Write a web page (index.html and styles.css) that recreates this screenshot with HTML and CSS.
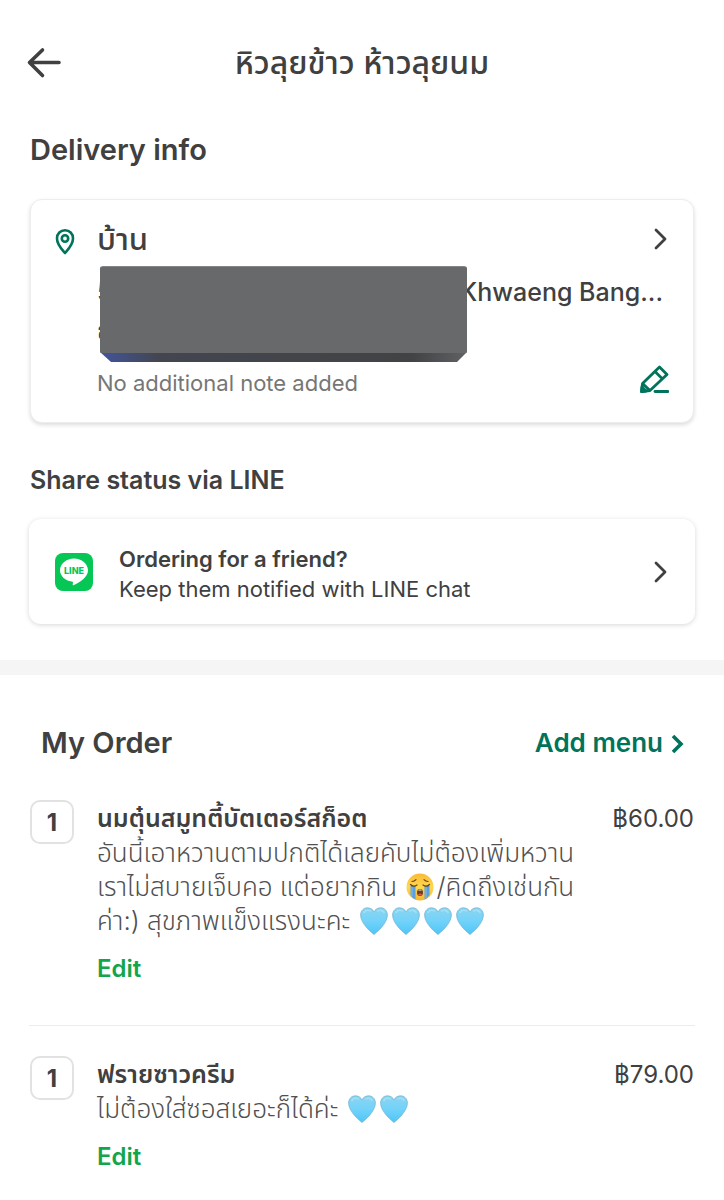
FILE: index.html
```html
<!DOCTYPE html>
<html lang="en">
<head>
<meta charset="utf-8">
<meta name="viewport" content="width=device-width, initial-scale=1">
<title>Order summary</title>
<link rel="stylesheet" href="styles.css">
</head>
<body>
<svg class="defs" aria-hidden="true">
  <defs>
    <linearGradient id="heart-fill" x1="0" y1="0" x2="0" y2="1">
      <stop offset="0" stop-color="#8cd5f0"/>
      <stop offset="0.5" stop-color="#72d2fa"/>
      <stop offset="1" stop-color="#4fc5f5"/>
    </linearGradient>
    <linearGradient id="face-fill" x1="0" y1="0" x2="0" y2="1">
      <stop offset="0" stop-color="#fbb936"/>
      <stop offset="0.5" stop-color="#fed94d"/>
      <stop offset="1" stop-color="#f6b52f"/>
    </linearGradient>
    <symbol id="heart" viewBox="0 0 28 28">
      <path d="M14 27.500C12 26 1 17 .6 8.500C.4 4 3.500 .8 7.400 .8C10.500 .8 13 2.500 14 5C15 2.500 17.500 .8 20.600 .8C24.500 .8 27.600 4 27.400 8.500C27 17 16 26 14 27.500Z" fill="url(#heart-fill)" stroke="#6fb0cc" stroke-width=".7"/>
      <path d="M4 5.500C5.500 3 8.500 2.600 10.500 4M17.500 4C19.500 2.600 22.500 3 24 5.500" fill="none" stroke="#a2e0f8" stroke-width="1.500" stroke-linecap="round"/>
    </symbol>
    <symbol id="crying" viewBox="0 0 28 28">
      <circle cx="14" cy="14" r="13.500" fill="url(#face-fill)"/>
      <path d="M4.500 13H9.500V26.500Q6.500 25.300 4.500 22ZM18.500 13H23.500V22Q21.500 25.300 18.500 26.500Z" fill="#5c9fe0"/>
      <path d="M6 14V23M20 14V25" stroke="#82bff0" stroke-width="1"/>
      <path d="M4.500 11.500Q7.500 14.500 11 12M17 12Q20.500 14.500 23.500 11.500M6 8.500Q8.500 8.200 10 6.600M18 6.600Q19.500 8.200 22 8.500" fill="none" stroke="#6b421c" stroke-width="1.200" stroke-linecap="round"/>
      <ellipse cx="14" cy="19.500" rx="3" ry="3.600" fill="#6d3e1d"/>
      <path d="M12 17.600Q14 15.400 16 17.600Z" fill="#fff"/>
      <path d="M12 21.500Q14 19.500 16 21.500Q14 23.600 12 21.500Z" fill="#df5b45"/>
    </symbol>
    <symbol id="chevron" viewBox="0 0 14 24">
      <path d="M3 3L12 12L3 21" fill="none" stroke="currentColor" stroke-width="2.800" stroke-linecap="round" stroke-linejoin="round"/>
    </symbol>
  </defs>
</svg>

<header class="topbar">
  <button class="icon-button" type="button" aria-label="Back">
    <svg width="36" height="32" viewBox="0 0 36 32" fill="none" stroke="currentColor" stroke-width="3.600" stroke-linecap="round" stroke-linejoin="round"><path d="M16.500 3L3.500 15.500L16.500 28.500M3.500 15.500H33"/></svg>
  </button>
  <h1 class="topbar-title">หิวลุยข้าว ห้าวลุยนม</h1>
</header>

<main>
  <section class="delivery">
    <h2 class="heading">Delivery info</h2>
    <div class="card address-card">
      <svg class="pin" width="22" height="28" viewBox="0 0 22 28" fill="none" stroke="currentColor" stroke-width="2.600"><path d="M11 25C9 22.500 3 17 3 10.500C3 5.500 6.500 2.300 11 2.300S19 5.500 19 10.500C19 17 13 22.500 11 25Z" stroke-linejoin="round"/><circle cx="11" cy="10.500" r="3.200"/></svg>
      <div class="address">
        <div class="place-row">
          <h3 class="place">บ้าน</h3>
          <button class="icon-button" type="button" aria-label="Change address"><svg width="14" height="24"><use href="#chevron"/></svg></button>
        </div>
        <div class="address-lines">
          <p class="address-line"><span>5</span><span>Khwaeng Bang...</span></p>
          <p class="address-line"><span>ถ</span></p>
          <div class="redaction"></div>
        </div>
        <div class="note-row">
          <p class="note">No additional note added</p>
          <button class="icon-button edit-note" type="button" aria-label="Edit note">
            <svg width="30" height="30" viewBox="0 0 30 30" fill="none" stroke="currentColor" stroke-width="2.800" stroke-linejoin="round"><path d="M2.500 26.500L3.500 18.500L20.500 2L28 9.500L11 25.500ZM16 6.500L23.500 14M3.500 18.500L11 25.500"/><path d="M2.500 26.500L3 22L7 26Z" fill="currentColor"/><path d="M16 26.500H29" stroke-linecap="round"/></svg>
          </button>
        </div>
      </div>
    </div>
  </section>

  <section class="share">
    <h2 class="heading heading-small">Share status via LINE</h2>
    <a class="card share-card" href="#">
      <svg class="line-logo" width="38" height="38" viewBox="0 0 38 38" role="img" aria-label="LINE">
        <rect width="38" height="38" rx="8" fill="#06c755"/>
        <path d="M19 5.500C11.300 5.500 5 10.800 5 17.300C5 23 10 27.600 16.700 28.600C18.500 29 18 29.600 17.700 31.500C17.600 32.400 18.100 32.600 19 32C24 29.500 33 24.700 33 17.300C33 10.800 26.700 5.500 19 5.500Z" fill="#fff"/>
        <text class="line-word" x="19" y="21" text-anchor="middle">LINE</text>
      </svg>
      <span class="share-text"><strong>Ordering for a friend?</strong><span>Keep them notified with LINE chat</span></span>
      <svg width="14" height="24"><use href="#chevron"/></svg>
    </a>
  </section>

  <section class="order">
    <div class="order-head">
      <h2 class="heading">My Order</h2>
      <a class="add-menu" href="#">Add menu <svg width="14" height="20" viewBox="0 0 14 20" fill="none" stroke="currentColor" stroke-width="3.600"><path d="M2 3L10 11L2 19"/></svg></a>
    </div>
    <ul class="items">
      <li class="item">
        <span class="quantity">1</span>
        <div class="item-body">
          <h3 class="item-name">นมตุ๋นสมูทตี้บัตเตอร์สก็อต</h3>
          <p class="item-note">อันนี้เอาหวานตามปกติได้เลยคับไม่ต้องเพิ่มหวาน<br>เราไม่สบายเจ็บคอ แต่อยากกิน <svg class="emoji" role="img" aria-label="crying face"><use href="#crying"/></svg>/คิดถึงเช่นกัน<br>ค่า:) สุขภาพแข็งแรงนะคะ <svg class="emoji" role="img" aria-label="blue heart"><use href="#heart"/></svg><svg class="emoji" role="img" aria-label="blue heart"><use href="#heart"/></svg><svg class="emoji" role="img" aria-label="blue heart"><use href="#heart"/></svg><svg class="emoji" role="img" aria-label="blue heart"><use href="#heart"/></svg></p>
          <button class="edit" type="button">Edit</button>
        </div>
        <span class="price">฿60.00</span>
      </li>
      <li class="item">
        <span class="quantity">1</span>
        <div class="item-body">
          <h3 class="item-name">ฟรายซาวครีม</h3>
          <p class="item-note">ไม่ต้องใส่ซอสเยอะก็ได้ค่ะ <svg class="emoji" role="img" aria-label="blue heart"><use href="#heart"/></svg><svg class="emoji" role="img" aria-label="blue heart"><use href="#heart"/></svg></p>
          <button class="edit" type="button">Edit</button>
        </div>
        <span class="price">฿79.00</span>
      </li>
    </ul>
  </section>
</main>
</body>
</html>
```
FILE: styles.css
```css
* { box-sizing: border-box; }

body {
  margin: 0;
  background: #fff;
  color: #404040;
  font-family: Inter, "Noto Sans Thai", "Noto Sans", sans-serif;
  font-size: 24px;
  line-height: 34px;
}

h1, h2, h3, p, ul { margin: 0; padding: 0; }
ul { list-style: none; }
a { color: inherit; text-decoration: none; }
svg { display: block; flex: none; }
.defs { position: absolute; width: 0; height: 0; }

button {
  padding: 0;
  border: 0;
  background: none;
  color: inherit;
  font: inherit;
  cursor: pointer;
}

.topbar {
  display: grid;
  grid-template-columns: 36px 1fr 36px;
  align-items: center;
  padding: 42px 26px 0;
}
.topbar-title {
  font-size: 32px;
  font-weight: 500;
  line-height: 42px;
  text-align: center;
}

.heading { font-size: 29px; font-weight: 600; line-height: 36px; }
.heading-small { font-size: 25px; }

.delivery { padding: 48px 30px 0; }
.card {
  display: flex;
  border-radius: 12px;
  background: #fff;
  box-shadow: 0 1px 5px rgba(0, 0, 0, 0.16);
}
.address-card {
  gap: 21px;
  margin-top: 31px;
  padding: 20px 24px 21px 23px;
  border: 1px solid #ededed;
  box-shadow: 0 2px 4px rgba(0, 0, 0, 0.14);
}
.pin { margin-top: 8px; color: #00735c; }
.address { flex: 1; min-width: 0; }
.place-row, .note-row, .address-line {
  display: flex;
  justify-content: space-between;
}
.place-row { align-items: center; padding-right: 2px; }
.place { font-size: 31px; font-weight: 500; line-height: 38px; }
.address-lines { position: relative; padding: 15px 6px 0 0; }
.address-line { font-size: 25px; font-weight: 500; line-height: 38px; }
.redaction {
  position: absolute;
  top: 8px;
  left: 3px;
  width: 367px;
  height: 96px;
  border-top: 1px solid #858687;
  border-radius: 3px 3px 0 0;
  background:
    linear-gradient(#68696a, #68696a) top / 100% 86px no-repeat,
    linear-gradient(90deg, #42549d, #43464f 16%, #424345 85%, #606164);
  clip-path: polygon(0 0, 100% 0, 100% 86px, calc(100% - 10px) 100%, 11px 100%, 0 86px);
}
.note-row { align-items: flex-start; margin-top: 16px; }
.note { color: #767676; font-size: 22px; line-height: 36px; }
.edit-note { color: #00735c; }

.share { padding: 39px 29px 36px; }
.share .heading { padding-left: 1px; }
.share-card {
  align-items: center;
  gap: 26px;
  margin-top: 21px;
  padding: 20px 28px 20px 26px;
}
.share-text {
  display: flex;
  flex: 1;
  flex-direction: column;
  padding-top: 5px;
  font-size: 22px;
  line-height: 30px;
}
.share-text strong { font-weight: 600; }
.line-word { fill: #06c755; font-size: 9px; font-weight: 800; }

.order { padding: 50px 29px 24px; border-top: 15px solid #f5f5f5; }
.order-head {
  display: flex;
  align-items: center;
  justify-content: space-between;
  padding: 0 10px 0 12px;
}
.add-menu {
  display: flex;
  align-items: center;
  gap: 8px;
  color: #00735c;
  font-size: 26px;
  font-weight: 600;
}
.item {
  display: flex;
  align-items: flex-start;
  padding: 39px 1px;
  border-bottom: 1px solid #ececec;
}
.item + .item { padding: 30px 1px 0; border-bottom: 0; }
.quantity {
  width: 44px;
  height: 44px;
  border: 2px solid #e2e2e2;
  border-radius: 10px;
  font-weight: 700;
  line-height: 42px;
  text-align: center;
}
.item-body { flex: 1; margin-left: 23px; }
.item-name { font-size: 25px; font-weight: 600; line-height: 36px; }
.item-note {
  color: #505050;
  font-size: 26px;
  font-weight: 300;
  white-space: nowrap;
}
.emoji {
  display: inline-block;
  width: 28px;
  height: 28px;
  margin: 0 2px;
  vertical-align: -5px;
}
.edit {
  display: block;
  margin-top: 14px;
  color: #13a54b;
  font-weight: 600;
  line-height: 34px;
}
.price { padding-top: 1px; line-height: 36px; }
```
